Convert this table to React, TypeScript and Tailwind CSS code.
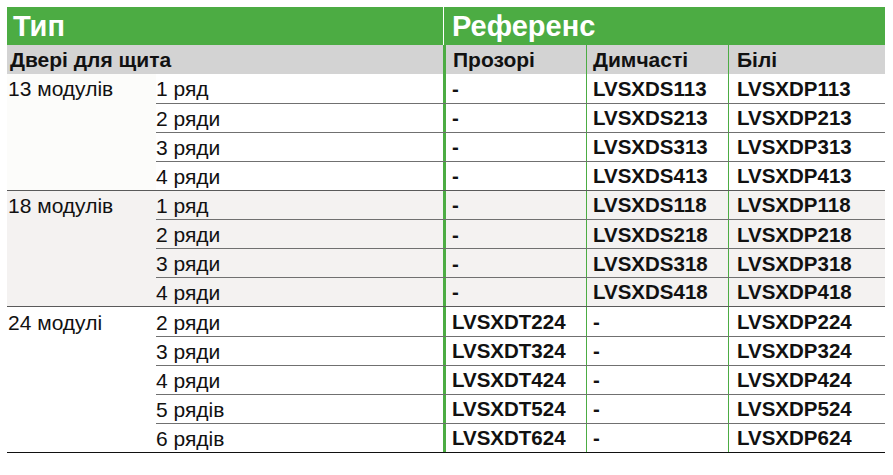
const groups = [
  {
    label: '13 модулів',
    labelBg: 'bg-[#fcfcfa]',
    rowBg: 'bg-white',
    rows: [
      ['1 ряд', '-', 'LVSXDS113', 'LVSXDP113'],
      ['2 ряди', '-', 'LVSXDS213', 'LVSXDP213'],
      ['3 ряди', '-', 'LVSXDS313', 'LVSXDP313'],
      ['4 ряди', '-', 'LVSXDS413', 'LVSXDP413'],
    ],
  },
  {
    label: '18 модулів',
    labelBg: 'bg-[#f4f2f1]',
    rowBg: 'bg-[#f4f2f1]',
    rows: [
      ['1 ряд', '-', 'LVSXDS118', 'LVSXDP118'],
      ['2 ряди', '-', 'LVSXDS218', 'LVSXDP218'],
      ['3 ряди', '-', 'LVSXDS318', 'LVSXDP318'],
      ['4 ряди', '-', 'LVSXDS418', 'LVSXDP418'],
    ],
  },
  {
    label: '24 модулі',
    labelBg: 'bg-white',
    rowBg: 'bg-white',
    rows: [
      ['2 ряди', 'LVSXDT224', '-', 'LVSXDP224'],
      ['3 ряди', 'LVSXDT324', '-', 'LVSXDP324'],
      ['4 ряди', 'LVSXDT424', '-', 'LVSXDP424'],
      ['5 рядів', 'LVSXDT524', '-', 'LVSXDP524'],
      ['6 рядів', 'LVSXDT624', '-', 'LVSXDP624'],
    ],
  },
];

const rowGrid = 'grid grid-cols-[287px_143px_142px_156px]';

export default function App() {
  return (
    <div className="min-h-screen bg-white pl-[7px] pt-[7px] font-['Liberation_Sans',Arial,sans-serif] text-[#111]">
      <div className="w-[878px]">
        {/* Green heading */}
        <div className="flex h-[38px] bg-white text-[29px] font-bold leading-none text-white">
          <div className="flex w-[436px] items-center bg-[#4cac43] pl-[6px] pt-[1px]">Тип</div>
          <div className="ml-px flex flex-1 items-center bg-[#4cac43] pl-[8px] pt-[1px]">Референс</div>
        </div>

        {/* Gray sub heading */}
        <div className="flex h-[29px] bg-[#d3d3d3] text-[21px] font-bold leading-none">
          <div className="flex w-[436px] items-center pl-[3px]">Двері для щита</div>
          <div className="flex w-[143px] items-center border-l-[3px] border-[#4cac43] pl-[7px]">Прозорі</div>
          <div className="flex w-[142px] items-center border-l border-[#4cac43] pl-[6px]">Димчасті</div>
          <div className="flex flex-1 items-center border-l border-[#4cac43] pl-[8px]">Білі</div>
        </div>

        {/* Body */}
        <div className="border-b-[1.5px] border-[#111] leading-none">
          {groups.map((g, gi) => (
            <div
              key={g.label}
              className={`flex ${gi > 0 ? 'border-t-[1.5px] border-[#5a5a5a]' : ''}`}
            >
              <div className={`w-[149px] pl-px text-[21px] ${g.labelBg}`}>
                <div className="flex h-[28.9px] items-center pt-px">{g.label}</div>
              </div>
              <div className={`flex-1 ${g.rowBg}`}>
                {g.rows.map((r, ri) => (
                  <div
                    key={r[0]}
                    className={`${rowGrid} h-[28.9px] ${ri > 0 ? 'border-t-[1.5px] border-[#707070]' : ''}`}
                  >
                    <div className="flex items-center pt-px text-[21px]">{r[0]}</div>
                    <div className="flex items-center border-l-[3px] border-[#4cac43] pl-[6px] pt-px text-[20.5px] font-bold">{r[1]}</div>
                    <div className="flex items-center border-l border-[#4cac43] pl-[6px] pt-px text-[20.5px] font-bold">{r[2]}</div>
                    <div className="flex items-center border-l border-[#4cac43] pl-[8px] pt-px text-[20.5px] font-bold">{r[3]}</div>
                  </div>
                ))}
              </div>
            </div>
          ))}
        </div>
      </div>
    </div>
  );
}
